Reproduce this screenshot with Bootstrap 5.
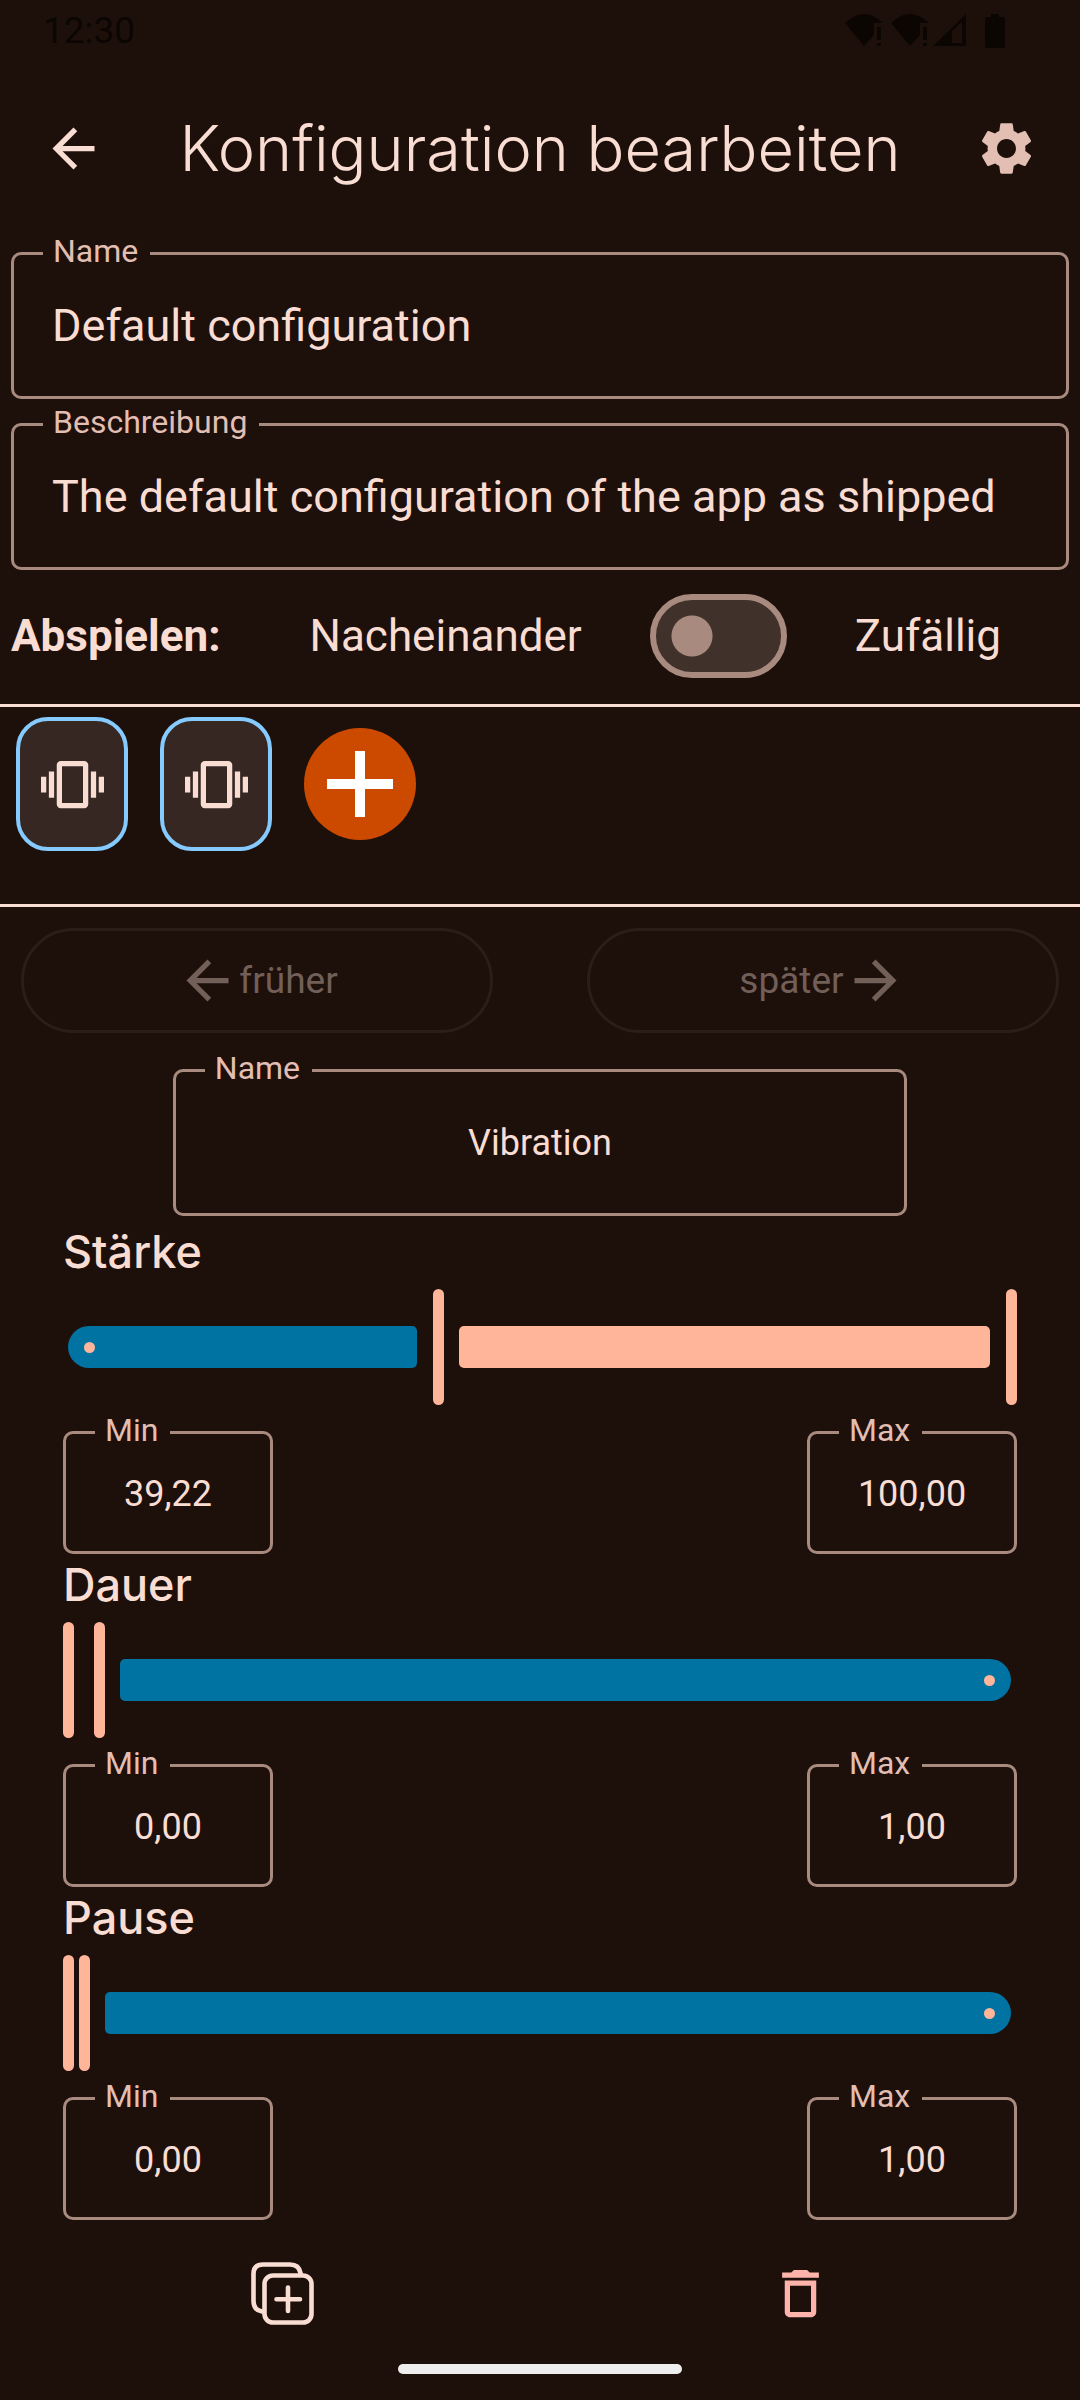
<!DOCTYPE html>
<html lang="de" data-bs-theme="dark">
<head>
<meta charset="utf-8">
<meta name="viewport" content="width=device-width, initial-scale=1">
<title>Konfiguration bearbeiten</title>
<link href="https://cdn.jsdelivr.net/npm/bootstrap@5.3.0/dist/css/bootstrap.min.css" rel="stylesheet">
<style>
  :root {
    --surface: #1d100b;
    --on-surface: #f9ddd3;
    --label: #e3beb2;
    --outline: #a98a7e;
    --primary: #ffb59a;
    --track: #0073a3;
  }
  body {
    background: var(--surface);
    color: var(--on-surface);
    font-family: Roboto, "Liberation Sans", sans-serif;
    font-size: 44px;
    line-height: 1.2;
  }
  .display-face { font-family: Inter, Lato, sans-serif; color: var(--on-surface); }
  .ico { width: 63px; height: 63px; fill: currentColor; flex: none; display: block; }
  .plain { background: none; border: 0; padding: 0; color: inherit; display: block; }

  .statusbar { height: 64px; padding: 0 73px 0 43px; color: #0c0603; font-size: 37px; }
  .statusbar .clock { line-height: 62px; }
  .statusbar svg { height: 34px; margin-top: 14px; fill: currentColor; }
  .topbar { height: 168px; padding: 0 42px; }
  .topbar h1 { font-size: 63px; font-weight: 300; line-height: 70px; }
  .gear { color: var(--label); }

  .outlined { position: relative; }
  .outlined label {
    position: absolute; left: 32px; top: -20px; padding: 0 12px 0 10px;
    background: var(--surface); color: var(--label);
    font-size: 32px; line-height: 38px;
  }
  .outlined input {
    display: block; width: 100%; height: 147px; padding: 0 38px;
    border: 3px solid var(--outline); border-radius: 10px;
    background: transparent; color: inherit; outline: 0; font-size: 45px;
  }
  .centered input { text-align: center; font-size: 36px; }
  .small-field { width: 210px; }
  .small-field input { height: 123px; padding: 2px 12px 0; }
  .vibration-name { width: 68%; margin: 36px auto 5px; }

  .page-fields { padding: 20px 11px 0; gap: 24px; }
  .play-row { padding: 24px 11px 26px; }
  .play-choice { gap: 68px; padding-right: 68px; }
  .form-switch .form-check-input.order-switch {
    appearance: none; display: block; float: none; width: 137px; height: 84px; margin: 0;
    border: 6px solid var(--outline); border-radius: 42px;
    background: #40312b radial-gradient(circle at 36px 36px, var(--outline) 20px, transparent 21px) no-repeat;
  }
  .form-switch.order-wrap { padding: 0; min-height: 0; }

  .strip {
    border-top: 3px solid var(--on-surface); border-bottom: 3px solid var(--on-surface);
    padding: 10px 16px 53px; gap: 32px;
  }
  .tile {
    width: 112px; height: 134px; border: 4px solid #86cbff; border-radius: 32px;
    background: #362723; color: var(--on-surface); padding: 0;
  }
  .add { width: 112px; height: 112px; border: 0; border-radius: 50%; background: #cc4a00; padding: 0; }
  .add svg { width: 66px; height: 66px; stroke: #fff; stroke-width: 10; display: block; }

  .order-buttons { padding: 21px 21px 0; gap: 94px; }
  .btn.btn-order {
    --bs-btn-disabled-color: #715f58;
    --bs-btn-disabled-border-color: #2d1d17;
    --bs-btn-disabled-opacity: 1;
    --bs-btn-border-width: 3px;
    flex: 1 1 0; height: 105px; border-radius: 53px; padding: 0;
    font-size: 37px; line-height: 44px;
  }

  .params { padding: 0 63px; }
  .params h2 { font-size: 45px; font-weight: 500; line-height: 62px; margin: 0 0 6px; }
  .dual { display: grid; align-items: center; height: 116px; margin-bottom: 26px; }
  .dual > * { grid-area: 1 / 1; }
  .rail { display: grid; height: 42px; margin: 0 6px 0 5px; }
  .seg { grid-area: 1 / 1; border-radius: 5px; background: var(--track); display: flex; align-items: center; padding: 0 16px; }
  .seg::before { content: ""; width: 11px; height: 11px; border-radius: 50%; background: var(--primary); }
  .seg-low { margin-right: calc(100% - var(--lo) + 21px); border-radius: 21px 5px 5px 21px; }
  .seg-mid { margin-left: calc(var(--lo) + 21px); margin-right: calc(100% - var(--hi) + 21px); background: var(--primary); }
  .seg-high { margin-left: calc(var(--hi) + 21px); border-radius: 5px 21px 21px 5px; justify-content: flex-end; }
  .dual input[type=range] {
    appearance: none; -webkit-appearance: none; width: 100%; height: 116px; margin: 0; padding: 0;
    background: none; pointer-events: none; outline: 0;
  }
  .dual input[type=range]::-webkit-slider-runnable-track { height: 116px; background: none; }
  .dual input[type=range]::-webkit-slider-thumb {
    appearance: none; -webkit-appearance: none; pointer-events: auto;
    width: 11px; height: 116px; margin: 0; border: 0; border-radius: 6px; background: var(--primary);
  }

  .actions { padding: 42px 21px 0 23px; }
  .actions > div { flex: 1 1 0; }
  .copy-ico { fill: none; stroke: currentColor; stroke-width: 4.6; stroke-linecap: round; }
  .trash-ico { color: #ffb4ab; }
  .homebar { width: 284px; height: 10px; border-radius: 5px; background: #eee; margin: 39px auto 0; }
</style>
</head>
<body>

<div class="statusbar d-flex justify-content-between">
  <span class="clock">12:30</span>
  <svg width="162" height="34" viewBox="0 0 162 34" aria-hidden="true">
    <g id="wifi">
      <path d="M0 9Q19-9 38 9H29V21L19 32Z"/>
      <path d="M32 13h4v13h-4zM32 29h4v3h-4z"/>
    </g>
    <use href="#wifi" x="46"/>
    <path fill-rule="evenodd" d="M88 32 121 0V32ZM107 17V29H117V8Z"/>
    <path d="M146 0h8v3h4q2 0 2 2v27q0 2-2 2h-16q-2 0-2-2V5q0-2 2-2h4z"/>
  </svg>
</div>

<header class="topbar d-flex align-items-center justify-content-between">
  <button class="plain" type="button" aria-label="Zurück">
    <svg class="ico" viewBox="0 0 24 24"><path d="M20 11H7.83l5.59-5.59L12 4l-8 8 8 8 1.41-1.41L7.83 13H20z"/></svg>
  </button>
  <h1 class="display-face m-0">Konfiguration bearbeiten</h1>
  <button class="plain gear" type="button" aria-label="Einstellungen">
    <svg class="ico" viewBox="0 0 24 24"><path d="M19.14 12.94c.04-.3.06-.61.06-.94 0-.32-.02-.64-.07-.94l2.03-1.58c.18-.14.23-.41.12-.61l-1.92-3.32c-.12-.22-.37-.29-.59-.22l-2.39.96c-.5-.38-1.03-.7-1.62-.94l-.36-2.54c-.04-.24-.24-.41-.48-.41h-3.84c-.24 0-.43.17-.47.41l-.36 2.54c-.59.24-1.13.57-1.62.94l-2.39-.96c-.22-.08-.47 0-.59.22L2.74 8.87c-.12.21-.08.47.12.61l2.03 1.58c-.05.3-.09.63-.09.94s.02.64.07.94l-2.03 1.58c-.18.14-.23.41-.12.61l1.92 3.32c.12.22.37.29.59.22l2.39-.96c.5.38 1.03.7 1.62.94l.36 2.54c.05.24.24.41.48.41h3.84c.24 0 .44-.17.47-.41l.36-2.54c.59-.24 1.13-.56 1.62-.94l2.39.96c.22.08.47 0 .59-.22l1.92-3.32c.12-.22.07-.47-.12-.61l-2.01-1.58zM12 15.6c-1.98 0-3.6-1.62-3.6-3.6s1.62-3.6 3.6-3.6 3.6 1.62 3.6 3.6-1.62 3.6-3.6 3.6z"/></svg>
  </button>
</header>

<main>
  <div class="page-fields d-flex flex-column">
    <div class="outlined">
      <input id="cfg-name" type="text" value="Default configuration">
      <label for="cfg-name">Name</label>
    </div>
    <div class="outlined">
      <input id="cfg-desc" type="text" value="The default configuration of the app as shipped">
      <label for="cfg-desc">Beschreibung</label>
    </div>
  </div>

  <div class="play-row d-flex align-items-center">
    <strong>Abspielen:</strong>
    <div class="play-choice d-flex flex-grow-1 align-items-center justify-content-end">
      <span>Nacheinander</span>
      <div class="form-check form-switch order-wrap m-0">
        <input class="form-check-input order-switch" type="checkbox" role="switch" id="order">
      </div>
      <label for="order">Zufällig</label>
    </div>
  </div>

  <div class="strip d-flex align-items-center">
    <button class="tile d-flex align-items-center justify-content-center" type="button" aria-label="Vibration 1">
      <svg class="ico" viewBox="0 0 24 24"><path d="M0 15h2V9H0v6zm3 2h2V7H3v10zm19-8v6h2V9h-2zm-3 8h2V7h-2v10zM16.5 3h-9C6.67 3 6 3.67 6 4.5v15c0 .83.67 1.5 1.5 1.5h9c.83 0 1.5-.67 1.5-1.5v-15c0-.83-.67-1.5-1.5-1.5zM16 19H8V5h8v14z"/></svg>
    </button>
    <button class="tile d-flex align-items-center justify-content-center" type="button" aria-label="Vibration 2">
      <svg class="ico" viewBox="0 0 24 24"><path d="M0 15h2V9H0v6zm3 2h2V7H3v10zm19-8v6h2V9h-2zm-3 8h2V7h-2v10zM16.5 3h-9C6.67 3 6 3.67 6 4.5v15c0 .83.67 1.5 1.5 1.5h9c.83 0 1.5-.67 1.5-1.5v-15c0-.83-.67-1.5-1.5-1.5zM16 19H8V5h8v14z"/></svg>
    </button>
    <button class="add d-flex align-items-center justify-content-center" type="button" aria-label="Hinzufügen">
      <svg viewBox="0 0 66 66"><path d="M33 0V66M0 33H66"/></svg>
    </button>
  </div>

  <div class="order-buttons d-flex">
    <button class="btn btn-order d-flex align-items-center justify-content-center" type="button" disabled>
      <svg class="ico" viewBox="0 0 24 24" aria-hidden="true"><path d="M20 11H7.83l5.59-5.59L12 4l-8 8 8 8 1.41-1.41L7.83 13H20z"/></svg>früher
    </button>
    <button class="btn btn-order d-flex align-items-center justify-content-center" type="button" disabled>
      später<svg class="ico" viewBox="0 0 24 24" aria-hidden="true"><path d="M12 4l-1.41 1.41L16.17 11H4v2h12.17l-5.58 5.59L12 20l8-8z"/></svg>
    </button>
  </div>

  <div class="outlined centered vibration-name">
    <input id="vib-name" type="text" value="Vibration">
    <label for="vib-name">Name</label>
  </div>

  <div class="params">
    <section>
      <h2 class="display-face">Stärke</h2>
      <div class="dual" style="--lo:39.22%;--hi:100%">
        <div class="rail"><span class="seg seg-low"></span><span class="seg seg-mid"></span></div>
        <input type="range" min="0" max="100" step="0.01" value="39.22" aria-label="Stärke Minimum">
        <input type="range" min="0" max="100" step="0.01" value="100" aria-label="Stärke Maximum">
      </div>
      <div class="d-flex justify-content-between">
        <div class="outlined centered small-field"><input id="s-min" type="text" value="39,22"><label for="s-min">Min</label></div>
        <div class="outlined centered small-field"><input id="s-max" type="text" value="100,00"><label for="s-max">Max</label></div>
      </div>
    </section>
    <section>
      <h2 class="display-face">Dauer</h2>
      <div class="dual" style="--lo:0%;--hi:3.33%">
        <div class="rail"><span class="seg seg-high"></span></div>
        <input type="range" min="0" max="30" step="0.01" value="0" aria-label="Dauer Minimum">
        <input type="range" min="0" max="30" step="0.01" value="1" aria-label="Dauer Maximum">
      </div>
      <div class="d-flex justify-content-between">
        <div class="outlined centered small-field"><input id="d-min" type="text" value="0,00"><label for="d-min">Min</label></div>
        <div class="outlined centered small-field"><input id="d-max" type="text" value="1,00"><label for="d-max">Max</label></div>
      </div>
    </section>
    <section>
      <h2 class="display-face">Pause</h2>
      <div class="dual" style="--lo:0%;--hi:1.67%">
        <div class="rail"><span class="seg seg-high"></span></div>
        <input type="range" min="0" max="60" step="0.01" value="0" aria-label="Pause Minimum">
        <input type="range" min="0" max="60" step="0.01" value="1" aria-label="Pause Maximum">
      </div>
      <div class="d-flex justify-content-between">
        <div class="outlined centered small-field"><input id="p-min" type="text" value="0,00"><label for="p-min">Min</label></div>
        <div class="outlined centered small-field"><input id="p-max" type="text" value="1,00"><label for="p-max">Max</label></div>
      </div>
    </section>
  </div>

  <div class="actions d-flex">
    <div class="d-flex justify-content-center">
      <button class="plain" type="button" aria-label="Duplizieren">
        <svg class="ico copy-ico" viewBox="0 0 63 63">
          <rect x="13.5" y="13.5" width="47" height="47" rx="8.5"/>
          <path d="M11 49.5Q2.5 48 2.5 39V12Q2.5 2.5 12 2.5H39Q48 2.5 49.5 11"/>
          <path d="M37 25.5V49M25.5 37.25H49"/>
        </svg>
      </button>
    </div>
    <div class="d-flex justify-content-center">
      <button class="plain" type="button" aria-label="Löschen">
        <svg class="ico trash-ico" viewBox="0 0 24 24"><path d="M6 19c0 1.1.9 2 2 2h8c1.1 0 2-.9 2-2V7H6v12zM8 9h8v10H8V9zm7.5-5l-1-1h-5l-1 1H5v2h14V4z"/></svg>
      </button>
    </div>
  </div>
</main>

<div class="homebar"></div>

<script src="https://cdn.jsdelivr.net/npm/bootstrap@5.3.0/dist/js/bootstrap.bundle.min.js"></script>
</body>
</html>
